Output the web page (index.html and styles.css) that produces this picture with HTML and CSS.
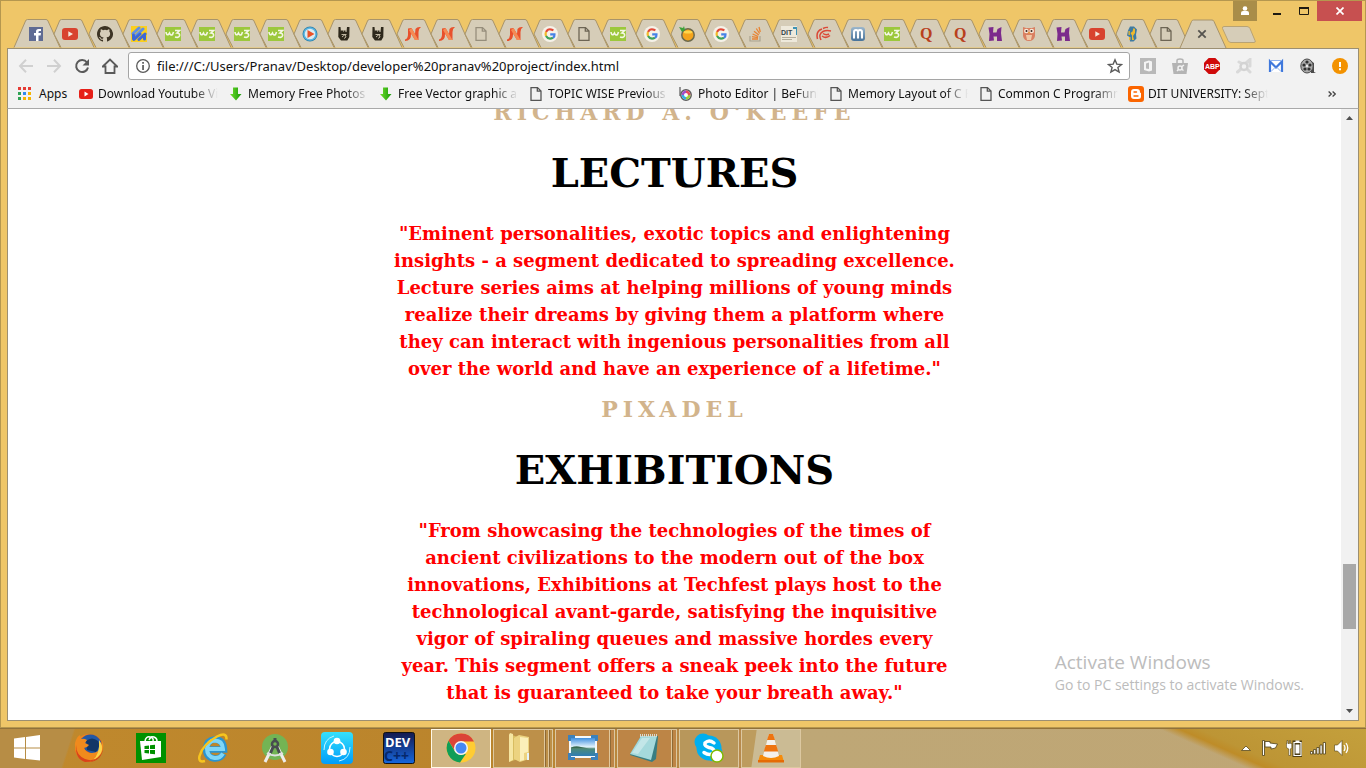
FILE: index.html
```html
<!DOCTYPE html>
<html lang="en">
<head>
<meta charset="utf-8">
<title>Techfest</title>
<link rel="stylesheet" href="styles.css">
</head>
<body>
<svg class="sprite" aria-hidden="true">
  <defs>
    <linearGradient id="arrowFill" x1="0" x2="1"><stop offset="0" stop-color="#6fdc2c"/><stop offset="1" stop-color="#189a08"/></linearGradient>
    <linearGradient id="shareFill" x1="0" y1="0" x2="0" y2="1"><stop offset="0" stop-color="#35e0fb"/><stop offset="1" stop-color="#009dfa"/></linearGradient>
    <linearGradient id="skyFill" x1="0" y1="0" x2="0" y2="1"><stop offset="0" stop-color="#3f8fe0"/><stop offset=".5" stop-color="#e4f4fb"/><stop offset=".6" stop-color="#4c8a78"/><stop offset="1" stop-color="#2f7db5"/></linearGradient>
    <linearGradient id="foxFill" x1="0" y1="0" x2="1" y2="1"><stop offset="0" stop-color="#f7941e"/><stop offset=".6" stop-color="#e0521a"/><stop offset="1" stop-color="#c93a14"/></linearGradient>
    <linearGradient id="devFill" x1="0" y1="0" x2="0" y2="1"><stop offset="0" stop-color="#15194e"/><stop offset="1" stop-color="#1667de"/></linearGradient>
    <linearGradient id="mailFill" x1="0" y1="0" x2="0" y2="1"><stop offset="0" stop-color="#9cb7cc"/><stop offset="1" stop-color="#48739a"/></linearGradient>
  </defs>
  <symbol id="tab" viewBox="0 0 48 29"><path class="tab-shape" d="M14 28.500L7 15L12.500 2Q13 .5 14.500 .5H33Q34.500 .5 35 2L47 28.500"/></symbol>
  <symbol id="tab-full" viewBox="0 0 48 29"><path class="tab-shape" d="M1 28.500L12.500 2Q13 .5 14.500 .5H33Q34.500 .5 35 2L47 28.500"/></symbol>
  <symbol id="facebook" viewBox="0 0 16 16"><path fill="#5f6b93" d="M1 1h14v14H1z"/><path fill="#fff" d="M8 15V9.500H6V7h2V5.500Q8 3 10.500 3H13v2h-1.500q-1 0-1 1v1H13l-.4 2.500h-2.100V15z"/></symbol>
  <symbol id="youtube" viewBox="0 0 16 16"><rect y="2" width="16" height="12" rx="3" fill="#d8432f"/><path fill="#f5e8dc" d="M6.300 5.300v5.400L11 8z"/></symbol>
  <symbol id="github" viewBox="0 0 16 16"><path fill="#3d3424" d="M8 0C3.580 0 0 3.580 0 8c0 3.540 2.290 6.530 5.470 7.590.4.070.55-.17.55-.38v-1.490c-2.010.37-2.530-.49-2.690-.94-.09-.23-.48-.94-.82-1.130-.28-.15-.68-.52-.01-.53.63-.01 1.080.58 1.230.82.72 1.210 1.870.87 2.330.66.070-.52.280-.87.510-1.070-1.780-.2-3.640-.89-3.640-3.950 0-.87.31-1.590.82-2.150-.08-.2-.36-1.020.08-2.120 0 0 .67-.21 2.200.82a7.600 7.600 0 0 1 4 0c1.530-1.040 2.200-.82 2.200-.82.44 1.100.16 1.920.08 2.120.51.56.82 1.270.82 2.150 0 3.070-1.870 3.750-3.650 3.950.29.25.54.73.54 1.480v2.190c0 .21.15.46.55.38A8 8 0 0 0 8 0z"/></symbol>
  <symbol id="stripes" viewBox="0 0 16 16"><path fill="#fbcf1e" d="M0 0h16v16H0z"/><g fill="none" stroke="#3d68d6" stroke-width="3" stroke-linecap="round"><path stroke="#5f8fe6" d="M2 7.500L8 2M5 9.500L12 3"/><path d="M3 13.500L9 8M8 13.500L14 8M2.500 9v4M13.500 9v4"/></g></symbol>
  <symbol id="w3" viewBox="0 0 16 16"><path fill="#9cc83c" d="M0 1h16v14H0z"/><path fill="none" stroke="#f5f7e6" stroke-width="1.600" d="M1 6q.5 3.500 2.500 2.500L4.500 7q1 3 3 1.500L8.500 6M10 4.500h4.500L12 7q3 0 2.500 2.700-.8 2.500-4.500 1.300"/></symbol>
  <symbol id="play" viewBox="0 0 16 16"><circle cx="8" cy="8" r="7.500" fill="#2d7fa8"/><circle cx="8" cy="8" r="6" fill="#dcecf2" stroke="#5bb6e2" stroke-width="1.500"/><path fill="#ea5228" d="M5.500 4l7 4-7 4z"/></symbol>
  <symbol id="rock" viewBox="0 0 16 16"><path fill="#2e281b" d="M2.500 1h2L5 6V4.500h2V6h.5V4.500h2V6h1L11 1h2.500L13.300 11l-2 3.500H5L2.300 11z"/><path stroke="#cfc5af" stroke-width=".9" d="M5.500 8.500h5M6 11l3-2.500 1 2.500-2 1.500" fill="none"/></symbol>
  <symbol id="ribbon" viewBox="0 0 16 16"><path fill="#e8502c" d="M0 13.500Q2.500 13 3 9V2.500L6.500 2l3.500 6 .5-5Q12 .5 16 1q-2.500 1.500-2.500 5V14H10L6 7.500Q6.500 15 0 15z"/><path fill="#f58a54" d="M6.500 2L13.500 14H10L4 4z"/></symbol>
  <symbol id="page" viewBox="0 0 16 16"><path fill="none" stroke="currentColor" stroke-width="1.300" d="M3 1.600h6.500L13 5v9.400H3zM9.300 1.600V5.200H13"/></symbol>
  <symbol id="google" viewBox="0 0 16 16"><circle cx="8" cy="8" r="8" fill="#f6f2e9"/><g fill="none" stroke-width="2.200"><path stroke="#e24a39" d="M4 6q1.500-3 4.500-2.700 1.600 0 2.800 1.200"/><path stroke="#f2b92a" d="M4 5.900q-.8 2 0 4.200"/><path stroke="#3ea35a" d="M4 10q2.500 4.200 7 1.800"/><path stroke="#4682e8" d="M11 12q1.700-1.500 1.500-3.700H8.200"/></g></symbol>
  <symbol id="orange" viewBox="0 0 16 16"><circle cx="9" cy="9" r="6.200" fill="#f5a41c" stroke="#6d6a4c" stroke-width="1.500"/><ellipse cx="9" cy="6" rx="4.500" ry="1.600" fill="#ffd64a"/><path fill="#3ea23a" d="M0 1l4 1 1-2 1 4-3 2z"/></symbol>
  <symbol id="stack" viewBox="0 0 16 16"><path fill="none" stroke="#aaa38f" stroke-width="1.200" d="M3 10v5h10v-5"/><path stroke="#e88434" stroke-width="1.300" d="M5 13h6M5 10.600l6 1M5.600 8l5.600 2.500M7 5.200l4.800 3.900M9.300 2.500l3.300 5M12 1l1.300 5"/></symbol>
  <symbol id="swirl" viewBox="0 0 16 16"><g fill="none" stroke="#db4837" stroke-width="1.500"><path d="M1.500 13Q-.5 5 6 3M5 14q-3-6 2-8.500Q10 4 15 5M6 10q4 3 8-.5M7 2.500q3-1.500 5-1M7 7.500q3 2 6 .5"/></g></symbol>
  <symbol id="mail" viewBox="0 0 16 16"><rect x="1" y="1" width="14" height="14" rx="3" fill="url(#mailFill)"/><path fill="none" stroke="#fff" stroke-width="2" d="M4 12.500V6q0-2 2-2t2 2v6.500M8 6q0-2 2-2t2 2v6.500"/></symbol>
  <symbol id="hx" viewBox="0 0 16 16"><path fill="#7c2b8c" d="M1.500 1.500L6.500 1 6 6.500h3.500L10.500 3l4-2-.5 6 1 8h-5V10.500H6.500l.5 4-5 .5.500-7z"/></symbol>
  <symbol id="owl" viewBox="0 0 16 16"><path fill="#d98062" d="M2 1l3 1h6l3-1v9q-1 5-6 5t-6-5z"/><circle cx="5.300" cy="5" r="2.300" fill="#f8e7d5"/><circle cx="10.700" cy="5" r="2.300" fill="#f8e7d5"/><circle cx="5.500" cy="5" r="1" fill="#3b2521"/><circle cx="10.500" cy="5" r="1" fill="#3b2521"/><path fill="#f0c8a6" d="M5 9h6l-1 5H6z"/><path fill="#eda22b" d="M7 6h2l-1 2z"/></symbol>
  <symbol id="figure" viewBox="0 0 16 16"><path fill="#3f7ba2" d="M6 .5h4l3 3-1 5 .5 4-3 3H6L5.500 11 3 9.500l1-5z"/><path fill="#f0b92d" d="M9.500 2l1.500 1v4l-2 3 1 4H8V9.500L6.500 7l2-1.500zM4.500 5h1.300v4H4.500zM5 11h1.500v3H5z"/></symbol>
  <symbol id="arrow" viewBox="0 0 16 16"><path fill="url(#arrowFill)" d="M5 1.500h5V8h3.500L8 14.500 2 8h3z"/></symbol>
  <symbol id="apps" viewBox="0 0 14 14"><path fill="#e53c35" d="M0 0h3v3H0zM5 0h3v3H5zM10 0h3v3h-3z"/><path fill="#2fa354" d="M0 5h3v3H0zM0 10h3v3H0z"/><path fill="#2f8af0" d="M5 5h3v3H5z"/><path fill="#f5b400" d="M10 5h3v3h-3zM5 10h3v3H5zM10 10h3v3h-3z"/></symbol>
  <symbol id="youtube-red" viewBox="0 0 16 16"><rect x="1" y="3" width="14" height="10" rx="2.500" fill="#e62019"/><path fill="#fff" d="M6.500 5.500v5l4-2.500z"/></symbol>
  <symbol id="befunky" viewBox="0 0 16 16"><path stroke="#777" stroke-width="1.500" d="M2 1v9"/><circle cx="8" cy="9" r="5.200" fill="#fff" stroke="#5c5c5c" stroke-width="1.500"/><g fill="none" stroke-width="2.500"><path stroke="#e5495b" d="M8 5.800A3.200 3.200 0 0 1 11.200 9"/><path stroke="#a24cc9" d="M4.800 9A3.200 3.200 0 0 1 8 5.800"/><path stroke="#36aee0" d="M8 12.200A3.200 3.200 0 0 1 4.800 9"/><path stroke="#9fce3a" d="M11.200 9A3.200 3.200 0 0 1 8 12.200"/></g></symbol>
  <symbol id="blogger" viewBox="0 0 16 16"><rect width="16" height="16" rx="3" fill="#fb6500"/><path fill="#fff" d="M6 3h3q3 0 3 3 0 .8 1 1v3.500Q13 13 10 13H6q-3 0-3-3V6q0-3 3-3z"/><path stroke="#fb6500" stroke-width="1.400" stroke-linecap="round" d="M6 6h2.500M6 10h4"/></symbol>
</svg>

<div class="desktop">
  <main class="window">
    <header class="titlebar">
      <button class="user" aria-label="User"><svg viewBox="0 0 24 20" width="24" height="20"><circle cx="12" cy="7.500" r="2.300" fill="#fff"/><path fill="#fff" d="M8 14v-2q0-2 2-2h4q2 0 2 2v2z"/></svg></button>
      <button class="caption" aria-label="Minimize"><svg viewBox="0 0 10 10" width="10" height="10"><path fill="#1e1a12" d="M1 7h8v2H1z"/></svg></button>
      <button class="caption" aria-label="Maximize"><svg viewBox="0 0 10 10" width="10" height="10"><path fill="none" stroke="#1e1a12" d="M.5 1.500h9v7h-9z"/><path fill="#1e1a12" d="M0 1h10v2H0z"/></svg></button>
      <button class="caption close" aria-label="Close"><svg viewBox="0 0 8 8" width="8" height="8"><path stroke="#fff" stroke-width="1.700" d="M.5 .5l7 7M7.500 .5l-7 7"/></svg></button>
    </header>

    <nav class="tabs" aria-label="Tabs">
      <button class="tab"><svg class="bg"><use href="#tab-full"/></svg><svg class="ico"><use href="#facebook"/></svg></button>
      <button class="tab"><svg class="bg"><use href="#tab"/></svg><svg class="ico"><use href="#youtube"/></svg></button>
      <button class="tab"><svg class="bg"><use href="#tab"/></svg><svg class="ico"><use href="#github"/></svg></button>
      <button class="tab"><svg class="bg"><use href="#tab"/></svg><svg class="ico"><use href="#stripes"/></svg></button>
      <button class="tab"><svg class="bg"><use href="#tab"/></svg><svg class="ico"><use href="#w3"/></svg></button>
      <button class="tab"><svg class="bg"><use href="#tab"/></svg><svg class="ico"><use href="#w3"/></svg></button>
      <button class="tab"><svg class="bg"><use href="#tab"/></svg><svg class="ico"><use href="#w3"/></svg></button>
      <button class="tab"><svg class="bg"><use href="#tab"/></svg><svg class="ico"><use href="#w3"/></svg></button>
      <button class="tab"><svg class="bg"><use href="#tab"/></svg><svg class="ico"><use href="#play"/></svg></button>
      <button class="tab"><svg class="bg"><use href="#tab"/></svg><svg class="ico"><use href="#rock"/></svg></button>
      <button class="tab"><svg class="bg"><use href="#tab"/></svg><svg class="ico"><use href="#rock"/></svg></button>
      <button class="tab"><svg class="bg"><use href="#tab"/></svg><svg class="ico"><use href="#ribbon"/></svg></button>
      <button class="tab"><svg class="bg"><use href="#tab"/></svg><svg class="ico"><use href="#ribbon"/></svg></button>
      <button class="tab"><svg class="bg"><use href="#tab"/></svg><svg class="ico faded"><use href="#page"/></svg></button>
      <button class="tab"><svg class="bg"><use href="#tab"/></svg><svg class="ico"><use href="#ribbon"/></svg></button>
      <button class="tab"><svg class="bg"><use href="#tab"/></svg><svg class="ico"><use href="#google"/></svg></button>
      <button class="tab"><svg class="bg"><use href="#tab"/></svg><svg class="ico"><use href="#page"/></svg></button>
      <button class="tab"><svg class="bg"><use href="#tab"/></svg><svg class="ico"><use href="#w3"/></svg></button>
      <button class="tab"><svg class="bg"><use href="#tab"/></svg><svg class="ico"><use href="#google"/></svg></button>
      <button class="tab"><svg class="bg"><use href="#tab"/></svg><svg class="ico"><use href="#orange"/></svg></button>
      <button class="tab"><svg class="bg"><use href="#tab"/></svg><svg class="ico"><use href="#google"/></svg></button>
      <button class="tab"><svg class="bg"><use href="#tab"/></svg><svg class="ico"><use href="#stack"/></svg></button>
      <button class="tab"><svg class="bg"><use href="#tab"/></svg><svg class="ico" viewBox="0 0 16 16"><path fill="#eee9db" d="M0 0h16v16H0z"/><path fill="#3e93b5" d="M12 1h4v8h-1V3h-3z"/><text x="0" y="9" class="dit-text">DIT</text><path stroke="#b3ad9c" d="M1 11.500h14M1 13.500h10"/></svg></button>
      <button class="tab"><svg class="bg"><use href="#tab"/></svg><svg class="ico"><use href="#swirl"/></svg></button>
      <button class="tab"><svg class="bg"><use href="#tab"/></svg><svg class="ico"><use href="#mail"/></svg></button>
      <button class="tab"><svg class="bg"><use href="#tab"/></svg><svg class="ico"><use href="#w3"/></svg></button>
      <button class="tab"><svg class="bg"><use href="#tab"/></svg><svg class="ico" viewBox="0 0 16 16"><text x="2" y="13" class="quora-text">Q</text></svg></button>
      <button class="tab"><svg class="bg"><use href="#tab"/></svg><svg class="ico" viewBox="0 0 16 16"><text x="2" y="13" class="quora-text">Q</text></svg></button>
      <button class="tab"><svg class="bg"><use href="#tab"/></svg><svg class="ico"><use href="#hx"/></svg></button>
      <button class="tab"><svg class="bg"><use href="#tab"/></svg><svg class="ico"><use href="#owl"/></svg></button>
      <button class="tab"><svg class="bg"><use href="#tab"/></svg><svg class="ico"><use href="#hx"/></svg></button>
      <button class="tab"><svg class="bg"><use href="#tab"/></svg><svg class="ico"><use href="#youtube"/></svg></button>
      <button class="tab"><svg class="bg"><use href="#tab"/></svg><svg class="ico"><use href="#figure"/></svg></button>
      <button class="tab"><svg class="bg"><use href="#tab"/></svg><svg class="ico"><use href="#page"/></svg></button>
      <button class="tab active" aria-label="Close tab"><svg class="bg"><use href="#tab-full"/></svg><svg class="ico" viewBox="0 0 16 16"><path stroke="#55534e" stroke-width="1.800" d="M4.300 4.300l7.400 7.400M11.700 4.300l-7.400 7.400"/></svg></button>
      <button class="new-tab" aria-label="New tab"><svg viewBox="0 0 36 18" width="36" height="18"><path fill="#d6cdb8" stroke="#b9a373" d="M3 .5h23q2 0 3 2l5 12q1 2-1 2H10q-2 0-3-2L1.500 2.500Q1 .5 3 .5z"/></svg></button>
    </nav>

    <div class="toolbar">
      <button class="nav-btn" aria-label="Back"><svg viewBox="0 0 16 16"><path fill="none" stroke="#d0d0d0" stroke-width="2" d="M15 8H2.500M8 1.800L2 8l6 6.200"/></svg></button>
      <button class="nav-btn" aria-label="Forward"><svg viewBox="0 0 16 16"><path fill="none" stroke="#d0d0d0" stroke-width="2" d="M1 8h12.500M8 1.800L14 8l-6 6.200"/></svg></button>
      <button class="nav-btn" aria-label="Reload"><svg viewBox="0 0 16 16"><path fill="none" stroke="#5a5a5a" stroke-width="2" d="M13 4.500A6 6 0 1 0 14 9.500"/><path fill="#5a5a5a" d="M15 1v6.500H8.500z"/></svg></button>
      <button class="nav-btn" aria-label="Home"><svg viewBox="0 0 16 16"><path fill="none" stroke="#5a5a5a" stroke-width="1.800" d="M.8 8.500L8 1.500l7.200 7H12.500V15h-9V8.500z"/></svg></button>
      <div class="omnibox">
        <svg viewBox="0 0 16 16" width="16" height="16"><circle cx="8" cy="8" r="6.300" fill="none" stroke="#5a5a5a" stroke-width="1.300"/><path fill="#5a5a5a" d="M7.200 4h1.700v1.700H7.200zM7.200 7h1.700v5H7.200z"/></svg>
        <input type="text" aria-label="Address" value="file:///C:/Users/Pranav/Desktop/developer%20pranav%20project/index.html">
        <button aria-label="Bookmark this page"><svg viewBox="0 0 16 16" width="16" height="16"><path fill="none" stroke="#5a5a5a" stroke-width="1.400" d="M8 1.800l1.800 4.300 4.700.4-3.600 3 1.200 4.600L8 11.600l-4.100 2.500 1.200-4.600-3.600-3 4.700-.4z"/></svg></button>
      </div>
      <div class="extensions">
        <button aria-label="Office"><svg viewBox="0 0 16 16"><path fill="#b9b9b9" d="M0 0h16v16H0z"/><path fill="#f4f4f4" d="M4 4l5-1.500 3 1v9l-3 1-5-1.500zm2 1.500v5l3 .5V4.500z" fill-rule="evenodd"/></svg></button>
        <button aria-label="Store"><svg viewBox="0 0 16 16"><path fill="#b4b4b4" d="M0 5h16l-1.500 11h-13z"/><path fill="none" stroke="#b4b4b4" stroke-width="1.500" d="M5 5V2.500Q5 1 8 1t3 1.500V5"/><path fill="none" stroke="#f2f2f2" stroke-width="1.500" d="M8 10l4-3M8 10l-3 3M8 10l3.500 2.500"/><circle cx="8" cy="10" r="2" fill="#b4b4b4" stroke="#f2f2f2" stroke-width="1.500"/></svg></button>
        <button aria-label="Adblock Plus"><svg viewBox="0 0 16 16"><path fill="#cf0a0a" d="M4.700 0h6.600L16 4.700v6.600L11.300 16H4.700L0 11.300V4.700z"/><text x="1" y="11" class="abp-text">ABP</text></svg></button>
        <button aria-label="Avast"><svg viewBox="0 0 16 16"><path fill="none" stroke="#d9d9d9" stroke-width="3" stroke-linecap="round" d="M10 5l4-3.500V8M5 11l-3.500 3M11 11l3 3M5 5L3 4"/><circle cx="8" cy="8.500" r="3.500" fill="#f2f2f2" stroke="#d3d3d3" stroke-width="2.500"/></svg></button>
        <button aria-label="Mail"><svg viewBox="0 0 16 16"><path fill="#fff" d="M1 3h14v11H1z"/><path fill="none" stroke="#3f78dc" stroke-width="2.200" d="M2 14V3.500l6 6 6-6V14"/><path fill="none" stroke="#8fb1ee" d="M3 13.500l4-4M13 13.500l-4-4M2 2.500h12"/></svg></button>
        <button aria-label="Video"><svg viewBox="0 0 16 16"><path fill="#4c4c4c" d="M9 2l5 3v9l2 1h-5z"/><ellipse cx="7" cy="8" rx="6.200" ry="7" fill="#aaa" stroke="#494949"/><g fill="#303030"><circle cx="7" cy="4" r="1.600"/><circle cx="4" cy="7" r="1.600"/><circle cx="10" cy="7" r="1.600"/><circle cx="5" cy="11" r="1.600"/><circle cx="9" cy="11" r="1.600"/></g><circle cx="7" cy="8" r="1" fill="#fff"/></svg></button>
        <button aria-label="Update"><svg viewBox="0 0 16 16"><circle cx="8" cy="8" r="8" fill="#f39200"/><path fill="#fff" d="M7 4h2v5H7zM7 10.300h2v2H7z"/></svg></button>
      </div>
    </div>

    <nav class="bookmarks" aria-label="Bookmarks">
      <a class="apps" href="#"><svg><use href="#apps"/></svg><span>Apps</span></a>
      <a href="#"><svg><use href="#youtube-red"/></svg><span class="fade">Download Youtube Vi</span></a>
      <a href="#"><svg><use href="#arrow"/></svg><span class="fade">Memory Free Photos f</span></a>
      <a href="#"><svg><use href="#arrow"/></svg><span class="fade">Free Vector graphic an</span></a>
      <a href="#"><svg><use href="#page"/></svg><span class="fade">TOPIC WISE Previous Y</span></a>
      <a href="#"><svg><use href="#befunky"/></svg><span class="fade">Photo Editor | BeFunky</span></a>
      <a href="#"><svg><use href="#page"/></svg><span class="fade">Memory Layout of C P</span></a>
      <a href="#"><svg><use href="#page"/></svg><span class="fade">Common C Programm</span></a>
      <a href="#"><svg><use href="#blogger"/></svg><span class="fade">DIT UNIVERSITY: Septe</span></a>
      <button class="more" aria-label="More bookmarks"><svg viewBox="0 0 8 6" width="8" height="6"><path fill="none" stroke="#444" stroke-width="1.300" d="M.6 .5L3.300 3 .6 5.500M4.600 .5L7.300 3 4.600 5.500"/></svg></button>
    </nav>

    <div class="viewport">
      <article class="content">
        <p class="sponsor">RICHARD A. O'KEEFE</p>
        <h1>LECTURES</h1>
        <p class="quote">"Eminent personalities, exotic topics and enlightening<br>insights - a segment dedicated to spreading excellence.<br>Lecture series aims at helping millions of young minds<br>realize their dreams by giving them a platform where<br>they can interact with ingenious personalities from all<br>over the world and have an experience of a lifetime."</p>
        <p class="sponsor">PIXADEL</p>
        <h1>EXHIBITIONS</h1>
        <p class="quote">"From showcasing the technologies of the times of<br>ancient civilizations to the modern out of the box<br>innovations, Exhibitions at Techfest plays host to the<br>technological avant-garde, satisfying the inquisitive<br>vigor of spiraling queues and massive hordes every<br>year. This segment offers a sneak peek into the future<br>that is guaranteed to take your breath away."</p>
      </article>
      <div class="scrollbar" aria-hidden="true">
        <svg viewBox="0 0 17 17"><path fill="#505050" d="M5 11l3.500-4 3.500 4z"/></svg>
        <div class="track"><div class="thumb"></div></div>
        <svg viewBox="0 0 17 17"><path fill="#505050" d="M5 6l3.500 4L12 6z"/></svg>
      </div>
      <aside class="watermark">
        <p class="wm-title">Activate Windows</p>
        <p class="wm-text">Go to PC settings to activate Windows.</p>
      </aside>
    </div>
  </main>

  <footer class="taskbar">
    <button class="start" aria-label="Start"><svg viewBox="0 0 26 26" width="26" height="26"><path fill="#fff" d="M0 3.500L11 2v10.500H0zM12 1.900L26 0v12.500H12zM0 13.500h11V24L0 22.500zM12 13.500h14V25.500L12 24z"/></svg></button>
    <button class="pin" aria-label="Firefox"><svg viewBox="0 0 30 30" width="30" height="30"><circle cx="15" cy="15" r="14" fill="url(#foxFill)"/><path fill="#2358a5" d="M7 6q7-7 15-3 6 4 6 11-1 8-8 8l-9-5-3-7z"/><path fill="#123667" d="M12 8q6-5 12 0 3 5-2 11l-9-2z"/><path fill="#f08a1d" d="M1 10q2-7 5-8l1 4q3-1 6 1l-2 3 4 2q-2 3-5 3 2 5 8 5 7 0 9-7l1-6q3 7-1 14-6 8-14 8Q0 26 1 10z"/><path fill="#fcd34a" d="M25 7q5 6 2 13-3 5-8 7 7-6 6-20z"/><path fill="#d9431a" d="M2 12q0 10 9 14 8 3 14-2-5 5-14 5Q1 26 2 12z"/></svg></button>
    <button class="pin" aria-label="Store"><svg viewBox="0 0 30 30" width="30" height="30"><path fill="#009100" d="M0 0h30v30H0z"/><path fill="none" stroke="#fff" stroke-width="1.500" d="M9 8q1-5 5-4t3 4M13 7q2-4 5-3t3 4"/><path fill="#fff" d="M4 8h21v16L6 27z"/><path fill="#009100" d="M8.500 13l4.500-.5V16H8.500zM14 12.300l5-.6V16h-5zM8.500 17H13v3.500l-4.500-.5zM14 17h5v4.300l-5-.6z"/></svg></button>
    <button class="pin" aria-label="Internet Explorer"><svg viewBox="0 0 30 30" width="30" height="30"><path fill="none" stroke="#2b94cf" stroke-width="6.500" d="M25.500 20.500q-3 5.500-9 5-8.500-1-8.500-10 1-8.500 8.500-9 9 0 9.500 10H10"/><path fill="none" stroke="#7fd6f7" stroke-width="4" d="M25 20.500q-3 5-8.500 4.500-7.500-1-7.500-9.500 1-7.500 7.500-8 8 0 8.500 8.500H10"/><path fill="none" stroke="#f7c51e" stroke-width="2.500" d="M7 28q-7 2-5.500-5Q5 11 19 3.500q10-5 9.500 3"/></svg></button>
    <button class="pin" aria-label="Android Studio"><svg viewBox="0 0 30 30" width="30" height="30"><circle cx="15" cy="14" r="13" fill="#73b454"/><path fill="none" stroke="#eee" stroke-width="3" d="M13 13L5 29M17 13l8 16"/><path fill="none" stroke="#e0e0e0" stroke-width="2" d="M7 20q8 5 16 0"/><path stroke="#484c50" stroke-width="3" d="M15 5v4M13.500 13l-3 7M16.500 13l3 7"/><circle cx="15" cy="11" r="3" fill="#73b454" stroke="#484c50" stroke-width="2.500"/></svg></button>
    <button class="pin" aria-label="SHAREit"><svg viewBox="0 0 32 32" width="32" height="32"><rect width="32" height="32" rx="4" fill="url(#shareFill)"/><circle cx="16" cy="17" r="7.500" fill="none" stroke="#fff" stroke-width="1.500"/><g fill="#fff"><circle cx="16" cy="9" r="3.300"/><circle cx="9.500" cy="20" r="3.300"/><circle cx="22.500" cy="20" r="3.300"/></g><path fill="none" stroke="#c4f5ff" d="M3 18Q3 7 13 4M29 15q0 12-11 14"/></svg></button>
    <button class="pin" aria-label="Dev-C++"><svg viewBox="0 0 32 32" width="32" height="32"><rect x=".5" y=".5" width="31" height="31" rx="2" fill="url(#devFill)" stroke="#111"/><text x="2" y="15" class="dev-text">DEV</text><text x="1" y="29" class="cpp-text">C++</text></svg></button>
    <div class="running">
      <button class="task current" aria-label="Chrome"><svg viewBox="0 0 30 30" width="30" height="30"><circle cx="15" cy="15" r="14.500" fill="#fc3"/><path fill="#db4437" d="M2.500 7.800A14.500 14.500 0 0 1 28 8.500H15L9 18z"/><path fill="#0f9d58" d="M2.500 7.800L9 18.500q3 4 7 3.300l4-1-6 8.700A14.500 14.500 0 0 1 2.500 7.800z"/><circle cx="15" cy="15" r="7" fill="#f5f5f5"/><circle cx="15" cy="15" r="5.500" fill="#4688f4"/></svg></button>
      <button class="task multi-3" aria-label="File Explorer"><svg viewBox="0 0 30 30" width="30" height="30"><path fill="#d8bd61" d="M5 1l9 3v22l-9 3z"/><path fill="#f6e6a2" d="M6 0l3 1v26l-4 2V2z"/><path fill="#ecd380" d="M10 5l5-3 10 2v22l-9 3-6-3z"/><path fill="#fbefb9" d="M16 4l8 1v14l-4 1v7l-4 1z"/><path fill="#e7f4f9" d="M23 20h2v7h-2z"/></svg></button>
      <button class="task multi-2" aria-label="Photos"><svg viewBox="0 0 30 30" width="30" height="30"><path fill="#f5f8fa" d="M1 3h28v22H1z"/><path fill="url(#skyFill)" d="M3 5h24v18H3z"/><path fill="#386b52" d="M3 14.500q5-2 10-.5l8 1.500H3z"/><path fill="none" stroke="#3d81bb" stroke-width="3" d="M1.500 8V3.500H7M23 3.500h5.500V8M1.500 20v5.500H7M23 25.500h5.500V20"/></svg></button>
      <button class="task multi-2" aria-label="Notepad"><svg viewBox="0 0 30 30" width="30" height="30"><path fill="#387d82" d="M11 3h17l-2 23-4 3L0 22z"/><path fill="#a5d9dc" d="M11 3h16l-6 24L0 21z"/><path fill="#c3e6e8" d="M12 5h8L8 21l-6-1z"/><path stroke="#d9d9d0" stroke-width="3" stroke-dasharray="1 1" d="M10 2.500h18"/></svg></button>
      <button class="task" aria-label="Skype"><svg viewBox="0 0 30 30" width="30" height="30"><circle cx="9" cy="9" r="8.500" fill="#00aff0"/><circle cx="20" cy="20" r="8.500" fill="#00aff0"/><circle cx="15" cy="15" r="12.500" fill="#00aff0"/><path fill="none" stroke="#fff" stroke-width="3.500" stroke-linecap="round" d="M20 10q-5-4-9 0-1 3 4 4.500 6 1 5 5-4 4-10 0"/><circle cx="23" cy="23" r="6" fill="#fff" stroke="#7fba00" stroke-width="1.500"/></svg></button>
      <button class="task soft" aria-label="VLC"><svg viewBox="0 0 30 30" width="30" height="30"><path fill="#f58b0b" d="M4 22h22l2 7H2z"/><path fill="#e56a05" d="M2 27h26v2.500H2z"/><path fill="#f4f1ec" d="M13 1h4l6 22q-8 4-16 0z"/><path fill="#ee7410" d="M13 1h4l2 6h-8zM9.800 12h10.400l2 6.500H7.800z"/></svg></button>
    </div>
    <div class="tray">
      <svg viewBox="0 0 16 18" width="16" height="18"><path fill="#fff" stroke="#5b4a1d" stroke-width=".8" d="M3.500 11.500L8 7l4.500 4.500z"/></svg>
      <svg viewBox="0 0 16 18" width="16" height="18"><path fill="#fff" stroke="#4d3f19" stroke-width=".8" d="M.5 1.500h2v15h-2zM3 2.500h5v1.500l7.500 1-2 4-4.500 1V8H3z"/></svg>
      <svg viewBox="0 0 16 18" width="16" height="18"><path fill="#4d3f19" d="M6.500 1.500h9.500V18H6.500z"/><path fill="#fff" stroke="#4d3f19" stroke-width=".6" d="M1 1.500h1v3h1.500v-3h1v3h1.300v4L4.500 10v6.500H2.800V10L.4 8.500v-4H1z"/><path fill="none" stroke="#fff" stroke-width="1.200" d="M8 3.500h7v13H8z"/><path fill="#fff" d="M9.500 1.500h4v2h-4zM9.500 5.500h4v9h-4z"/></svg>
      <svg viewBox="0 0 16 18" width="16" height="18"><path fill="#fff" stroke="#4d3f19" stroke-width=".8" d="M.4 12.500h2.200v2.500H.4zM3.600 10.500h2.200V15H3.600zM6.800 8.500H9V15H6.800zM10 6h2.200v9H10zM13.200 3.500h2.300V15h-2.300z"/></svg>
      <svg viewBox="0 0 16 18" width="16" height="18"><path fill="#fff" stroke="#4d3f19" stroke-width=".6" d="M.5 6h3L8 1.500v15L3.500 12h-3z"/><path fill="none" stroke="#fff" stroke-width="1.300" d="M10 6q2 3 0 6M12 4q3.500 5 0 10"/></svg>
    </div>
  </footer>
</div>
</body>
</html>
```
FILE: styles.css
```css
* { box-sizing: border-box; }

html, body { height: 100%; }

body {
  margin: 0;
  font: 12px/16px "Noto Sans", sans-serif;
  color: #111;
}

button {
  padding: 0;
  border: 0;
  background: none;
  font: inherit;
}

svg { display: block; flex: none; }

.sprite { position: absolute; width: 0; height: 0; }

.desktop {
  display: flex;
  flex-direction: column;
  height: 100vh;
  overflow: hidden;
}

.window {
  flex: 1;
  min-height: 0;
  display: flex;
  flex-direction: column;
  padding: 0 6px 6px;
  border: 1px solid #b5974f;
  background: #efc668;
}

/* Title bar */
.titlebar {
  display: flex;
  justify-content: flex-end;
  height: 18px;
  margin-right: -3px;
}

.user { width: 24px; height: 20px; background: #a98d49; }

.caption {
  display: flex;
  align-items: center;
  justify-content: center;
  width: 27px;
  height: 20px;
}

.user + .caption { margin-left: 6px; }

.close { width: 45px; background: #c75050; }

/* Tab strip */
.tabs {
  position: relative;
  display: flex;
  height: 29px;
  padding: 0 138px 0 12px;
}

.tab {
  position: relative;
  flex: 1;
  min-width: 0;
  height: 29px;
  display: flex;
  align-items: center;
  justify-content: center;
}

.tab .bg {
  position: absolute;
  left: 50%;
  top: 0;
  width: 48px;
  height: 29px;
  margin-left: -23px;
}

.tab .ico { position: relative; width: 16px; height: 16px; color: #6d6554; }
.tab .faded { opacity: .6; }

.tab-shape { fill: #d6cdb8; stroke: #a8946a; }
.tab.active { flex: none; width: 38px; z-index: 2; }
.tab.active .tab-shape { fill: #f2f2f2; }
.tab.active .bg { height: 30px; }

.new-tab { position: absolute; right: 102px; top: 7px; }

/* Toolbar */
.toolbar {
  display: flex;
  align-items: center;
  gap: 12px;
  height: 35px;
  padding: 0 10px;
  border: solid #9c8f72;
  border-width: 1px 1px 0;
  background: #f2f2f2;
}

.nav-btn svg { width: 16px; height: 16px; }

.omnibox {
  flex: 1;
  min-width: 0;
  display: flex;
  align-items: center;
  gap: 6px;
  height: 28px;
  margin-left: -2px;
  padding: 0 6px;
  border: 1px solid #a5a5a5;
  border-radius: 3px;
  background: #fff;
}

.omnibox input {
  flex: 1;
  min-width: 0;
  height: 24px;
  padding: 0;
  border: 0;
  outline: 0;
  font: 13px/18px "Noto Sans", sans-serif;
  color: #111;
}

.extensions { display: flex; gap: 16px; margin-left: -2px; }
.extensions svg { width: 16px; height: 16px; }

/* Bookmarks bar */
.bookmarks {
  display: flex;
  align-items: center;
  gap: 10px;
  height: 26px;
  padding: 0 22px 3px 10px;
  border: solid #9c8f72;
  border-width: 0 1px;
  border-bottom: 1px solid #a9a9a9;
  background: #f2f2f2;
}

.bookmarks a {
  display: flex;
  align-items: center;
  gap: 4px;
  width: 140px;
  color: #111;
  text-decoration: none;
}

.bookmarks .apps { width: 50px; gap: 7px; }
.bookmarks a svg { width: 16px; height: 16px; color: #555; }
.bookmarks .apps svg { width: 14px; height: 14px; }

.fade {
  flex: 1;
  min-width: 0;
  white-space: nowrap;
  -webkit-mask-image: linear-gradient(90deg, #000 80%, transparent);
  mask-image: linear-gradient(90deg, #000 80%, transparent);
}

.more { margin-left: auto; }

/* Page */
.viewport {
  position: relative;
  flex: 1;
  min-height: 0;
  display: flex;
  border: solid #9c8f72;
  border-width: 0 1px 1px;
  background: #fff;
}

.content {
  flex: 1;
  min-width: 0;
  overflow: hidden;
  text-align: center;
  font-family: "DejaVu Serif", serif;
  font-weight: bold;
}

.content p, .content h1 { margin: 0; }

.content .sponsor {
  margin-top: 13px;
  font-size: 22px;
  line-height: 28px;
  letter-spacing: 5px;
  color: #d2b48c;
}

.content .sponsor:first-child { margin-top: -11px; }

.content h1 {
  margin: 18px 0;
  font-size: 40px;
  line-height: 58px;
  color: #000;
}

.quote { font-size: 18px; line-height: 27px; color: #f00; }

.scrollbar {
  display: flex;
  flex-direction: column;
  width: 17px;
  background: #f1f1f1;
}

.scrollbar svg { width: 17px; height: 17px; }
.track { flex: 1; display: flex; flex-direction: column; padding: 0 2px; }
.track::before { content: ""; flex: 437; }
.track::after { content: ""; flex: 74; }
.thumb { flex: 65; background: #a8a8a8; }

.watermark {
  position: absolute;
  right: 54px;
  bottom: 24px;
  font-family: "Open Sans", sans-serif;
  color: #bcbcbc;
}

.watermark p { margin: 0; }
.wm-title { font-size: 19px; line-height: 24px; }
.wm-text { font-size: 14px; line-height: 22px; }

/* Taskbar */
.taskbar {
  display: flex;
  align-items: center;
  height: 40px;
  border-top: 1px solid #91713a;
  background:
    linear-gradient(204deg, #c4a03c 0, #bd9535 68px, #be8c28 76px, transparent 84px),
    linear-gradient(108deg, #b78d45 70px, transparent 72px),
    linear-gradient(90deg, #c0892d, #ba842c 500px, #b78a4f 760px, #bea776 800px, #bfa675);
}

.start { display: flex; justify-content: center; width: 54px; padding-bottom: 2px; }
.pin { display: flex; justify-content: center; width: 62px; padding-bottom: 2px; }
.start + .pin { margin-left: 4px; }

.running { display: flex; gap: 2px; margin-left: 1px; }

.task {
  display: flex;
  align-items: center;
  justify-content: center;
  width: 60px;
  height: 39px;
  padding-bottom: 2px;
  border: 1px solid #dcc8a1;
  background: #bd9259;
}

.task.current { border-color: #fff8e8; background: #cfb582; }
.task:nth-child(5) { background: #b8975b; }
.task.soft { background: linear-gradient(98deg, #bd9c5e 14px, #cbbb94 15px); }

.multi-2 { padding-right: 5px; background: linear-gradient(90deg, transparent 53px, #e0c79c 53px 54px, #8f6a35 54px 55px, transparent 55px), #bd8546; }
.multi-3 { padding-right: 8px; background: linear-gradient(90deg, transparent 50px, #e0c79c 50px 51px, #8f6a35 51px 52px, transparent 52px 54px, #e0c79c 54px 55px, #8f6a35 55px 56px, transparent 56px), #bd9049; }

.tray { display: flex; gap: 8px; margin-left: auto; padding: 0 16px 2px 0; }

/* Lettering inside icons */
.dit-text { font: bold 7px "Liberation Sans", sans-serif; fill: #35444c; }
.quora-text { font: bold 16px "Liberation Serif", serif; fill: #b9401d; }
.abp-text { font: bold 7px "Liberation Sans", sans-serif; fill: #fff; }
.dev-text { font: bold 13px "Noto Sans", sans-serif; fill: #fff; }
.cpp-text { font: bold 14px "Noto Sans", sans-serif; fill: #06286b; }
```
